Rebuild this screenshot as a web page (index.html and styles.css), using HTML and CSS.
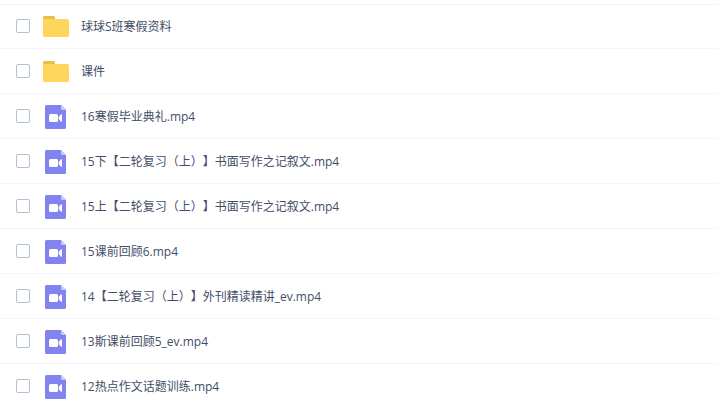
FILE: index.html
```html
<!DOCTYPE html>
<html lang="zh-CN">
  <head>
    <meta charset="utf-8" />
    <title>课件</title>
    <link rel="stylesheet" href="styles.css">
  </head>
  <body>
    <svg class="sprite">
      <symbol id="folder" viewBox="0 0 26 24">
        <path fill="#ebbd48" d="M0 8V2.500Q0 1 1.500 1H10.500Q12 1 12 2.500V8Z" />
        <path fill="#ffd65c" d="M0 4H24.500Q26 4 26 5.500V20.500Q26 22 24.500 22H1.500Q0 22 0 20.500Z" />
      </symbol>
      <symbol id="video" viewBox="0 0 26 24">
        <path fill="#8183f1" d="M3.500 0H18L23 5V22.500Q23 24 21.500 24H3.500Q2 24 2 22.500V1.500Q2 0 3.500 0Z" />
        <path fill="#c9caf9" d="M18 0L23 5H19Q18 5 18 4Z" />
        <rect fill="#fff" x="6" y="9" width="9" height="8" rx="1.500" />
        <path fill="#fff" d="M15.700 12L18 9.300Q19 8.800 19 9.800V16.200Q19 17.200 18 16.700L15.700 14Z" />
      </symbol>
    </svg>
    <ul class="file-list">
      <li class="file">
        <span class="checkbox"></span>
        <svg class="icon"><use href="#folder" /></svg>
        <span class="name">球球S班寒假资料</span>
      </li>
      <li class="file">
        <span class="checkbox"></span>
        <svg class="icon"><use href="#folder" /></svg>
        <span class="name">课件</span>
      </li>
      <li class="file">
        <span class="checkbox"></span>
        <svg class="icon"><use href="#video" /></svg>
        <span class="name">16寒假毕业典礼.mp4</span>
      </li>
      <li class="file">
        <span class="checkbox"></span>
        <svg class="icon"><use href="#video" /></svg>
        <span class="name">15下【二轮复习（上）】书面写作之记叙文.mp4</span>
      </li>
      <li class="file">
        <span class="checkbox"></span>
        <svg class="icon"><use href="#video" /></svg>
        <span class="name">15上【二轮复习（上）】书面写作之记叙文.mp4</span>
      </li>
      <li class="file">
        <span class="checkbox"></span>
        <svg class="icon"><use href="#video" /></svg>
        <span class="name">15课前回顾6.mp4</span>
      </li>
      <li class="file">
        <span class="checkbox"></span>
        <svg class="icon"><use href="#video" /></svg>
        <span class="name">14【二轮复习（上）】外刊精读精讲_ev.mp4</span>
      </li>
      <li class="file">
        <span class="checkbox"></span>
        <svg class="icon"><use href="#video" /></svg>
        <span class="name">13斯课前回顾5_ev.mp4</span>
      </li>
      <li class="file">
        <span class="checkbox"></span>
        <svg class="icon"><use href="#video" /></svg>
        <span class="name">12热点作文话题训练.mp4</span>
      </li>
    </ul>
  </body>
</html>
```

FILE: styles.css
```css
* {
  box-sizing: border-box;
}
body {
  margin: 0;
  height: 404px;
  overflow: hidden;
  background: #fff;
  color: #424e67;
  font: 12px/18px "Open Sans", "Noto Sans CJK SC", sans-serif;
  text-spacing-trim: space-all;
}
.sprite {
  display: none;
}
.file-list {
  list-style: none;
  margin: 0;
  padding: 4px 0 0;
}
.file {
  display: flex;
  align-items: center;
  height: 45px;
  padding-left: 16px;
  border-bottom: 1px solid #f1f5fd;
}
.file:first-child {
  box-shadow: inset 0 1px #f2f4f7;
}
.checkbox {
  width: 14px;
  height: 14px;
  border: 1px solid #b4c0d2;
  border-radius: 2px;
}
.icon {
  width: 26px;
  height: 24px;
  margin: 2px 12px 0 13px;
}
.name {
  padding-top: 2px;
  white-space: nowrap;
}
```
